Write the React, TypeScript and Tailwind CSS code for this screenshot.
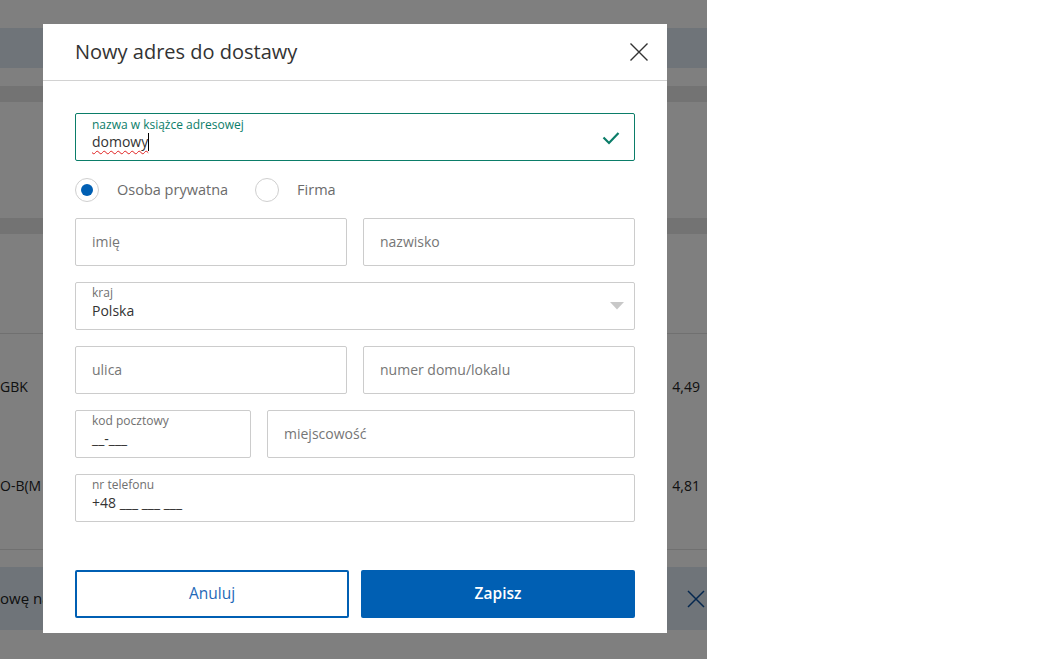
import React from "react";

function Field({
  label,
  value,
  placeholder,
  className = "",
  children,
}: {
  label?: string;
  value?: string;
  placeholder?: string;
  className?: string;
  children?: React.ReactNode;
}) {
  return (
    <div
      className={`relative h-[48px] border border-[#cccccc] rounded-[2px] px-[16px] ${className}`}
    >
      {label ? (
        <div className="pt-[2px]">
          <div className="text-[12px] leading-[16px] text-[#707070]">{label}</div>
          <div className="text-[14px] leading-[20px] text-[#333]">{value}</div>
        </div>
      ) : (
        <div className="h-full flex items-center pb-[2px] text-[14px] text-[#767676]">{placeholder}</div>
      )}
      {children}
    </div>
  );
}

export default function App() {
  return (
    <div
      className="w-[1040px] h-[659px] flex bg-white overflow-hidden"
      style={{ fontFamily: '"Open Sans", "Noto Sans", sans-serif' }}
    >
      <div className="relative w-[707px] h-[659px] bg-white overflow-hidden">
        {/* page underneath */}
        <div className="flex flex-col text-[14px] text-[#222]">
          <div className="h-[28px]" />
          <div className="h-[40px] bg-[#dee9f3]" />
          <div className="h-[18px]" />
          <div className="h-[16px] bg-[#e6e6e6]" />
          <div className="h-[116px]" />
          <div className="h-[16px] bg-[#e6e6e6]" />
          <div className="h-[100px] border-b border-[#e0e0e0]" />
          <div className="h-[104px] flex items-center justify-between pr-[7px]">
            <span>GBK</span>
            <span>4,49</span>
          </div>
          <div className="h-[94px] flex items-center justify-between pr-[7px]">
            <span>O-B(M</span>
            <span>4,81</span>
          </div>
          <div className="h-[18px] border-b border-[#e0e0e0]" />
          <div className="h-[17px]" />
          <div className="h-[63px] bg-[#dee9f3] flex items-center justify-between pr-[2px]">
            <span className="text-[15px]">owę nazwę</span>
            <svg width="18" height="18" viewBox="0 0 18 18" className="text-[#0a4f9e]">
              <path d="M1 1 L17 17 M17 1 L1 17" stroke="currentColor" strokeWidth="1.5" />
            </svg>
          </div>
        </div>

        {/* overlay */}
        <div className="absolute inset-0 bg-black/50" />

        {/* modal */}
        <div className="absolute left-[43px] top-[24px] w-[624px] h-[609px] bg-white flex flex-col">
          <div className="h-[57px] border-b border-[#d2d2d2] flex items-center justify-between pl-[32px] pr-[18px]">
            <h1 className="text-[20px] text-[#333] leading-none -mt-[1px]">Nowy adres do dostawy</h1>
            <svg width="20" height="20" viewBox="0 0 20 20">
              <path d="M1.5 1.5 L18.5 18.5 M18.5 1.5 L1.5 18.5" stroke="#333" strokeWidth="1.4" />
            </svg>
          </div>

          <div className="px-[32px] pt-[32px] pb-[15px] flex flex-col">
            <div className="relative h-[48px] border border-[#0b7d69] rounded-[2px] px-[16px]">
              <div className="pt-[3px]">
                <div className="text-[12px] leading-[16px] text-[#0b7d69]">nazwa w książce adresowej</div>
                <div className="text-[14px] leading-[20px] text-[#333] flex items-center -mt-[1px]">
                  <span className="underline decoration-wavy decoration-[#e02020] decoration-1 underline-offset-[3px]">
                    domowy
                  </span>
                  <span className="inline-block w-px h-[18px] bg-black" />
                </div>
              </div>
              <svg
                width="18"
                height="14"
                viewBox="0 0 18 14"
                className="absolute right-[14px] top-[17px]"
              >
                <path d="M1.5 6.5 L7 12 L16.5 2" fill="none" stroke="#0b7d69" strokeWidth="2.2" />
              </svg>
            </div>

            <div className="pt-[17px] pb-[16px] flex items-center h-[57px]">
              <div className="w-[24px] h-[24px] rounded-full border border-[#cfcfcf] flex items-center justify-center">
                <div className="w-[12px] h-[12px] rounded-full bg-[#005fb3]" />
              </div>
              <span className="ml-[18px] text-[14.5px] text-[#6b6b6b] -mt-[1px]">Osoba prywatna</span>
              <div className="ml-[27px] w-[24px] h-[24px] rounded-full border border-[#cfcfcf]" />
              <span className="ml-[18px] text-[14.5px] text-[#6b6b6b] -mt-[1px]">Firma</span>
            </div>

            <div className="flex flex-col gap-[16px]">
              <div className="grid grid-cols-2 gap-[16px]">
                <Field placeholder="imię" />
                <Field placeholder="nazwisko" />
              </div>
              <Field label="kraj" value="Polska">
                <svg
                  width="14"
                  height="8"
                  viewBox="0 0 14 8"
                  className="absolute right-[10px] top-[19px]"
                >
                  <path d="M0 0 L14 0 L7 7.5 Z" fill="#c8c8c8" />
                </svg>
              </Field>
              <div className="grid grid-cols-2 gap-[16px]">
                <Field placeholder="ulica" />
                <Field placeholder="numer domu/lokalu" />
              </div>
              <div className="flex gap-[16px]">
                <Field label="kod pocztowy" value="__-___" className="w-[176px] shrink-0" />
                <Field placeholder="miejscowość" className="flex-1" />
              </div>
              <Field label="nr telefonu" value="+48 ___ ___ ___" />
            </div>

            <div className="mt-[48px] flex gap-[12px]">
              <button className="w-[274px] h-[48px] pb-[1px] border-2 border-[#005fb3] rounded-[2px] text-[15.5px] text-[#1f69b8] bg-white">
                Anuluj
              </button>
              <button className="w-[274px] h-[48px] pb-[1px] rounded-[2px] bg-[#005fb3] text-[15.5px] font-semibold text-white">
                Zapisz
              </button>
            </div>
          </div>
        </div>
      </div>
    </div>
  );
}
